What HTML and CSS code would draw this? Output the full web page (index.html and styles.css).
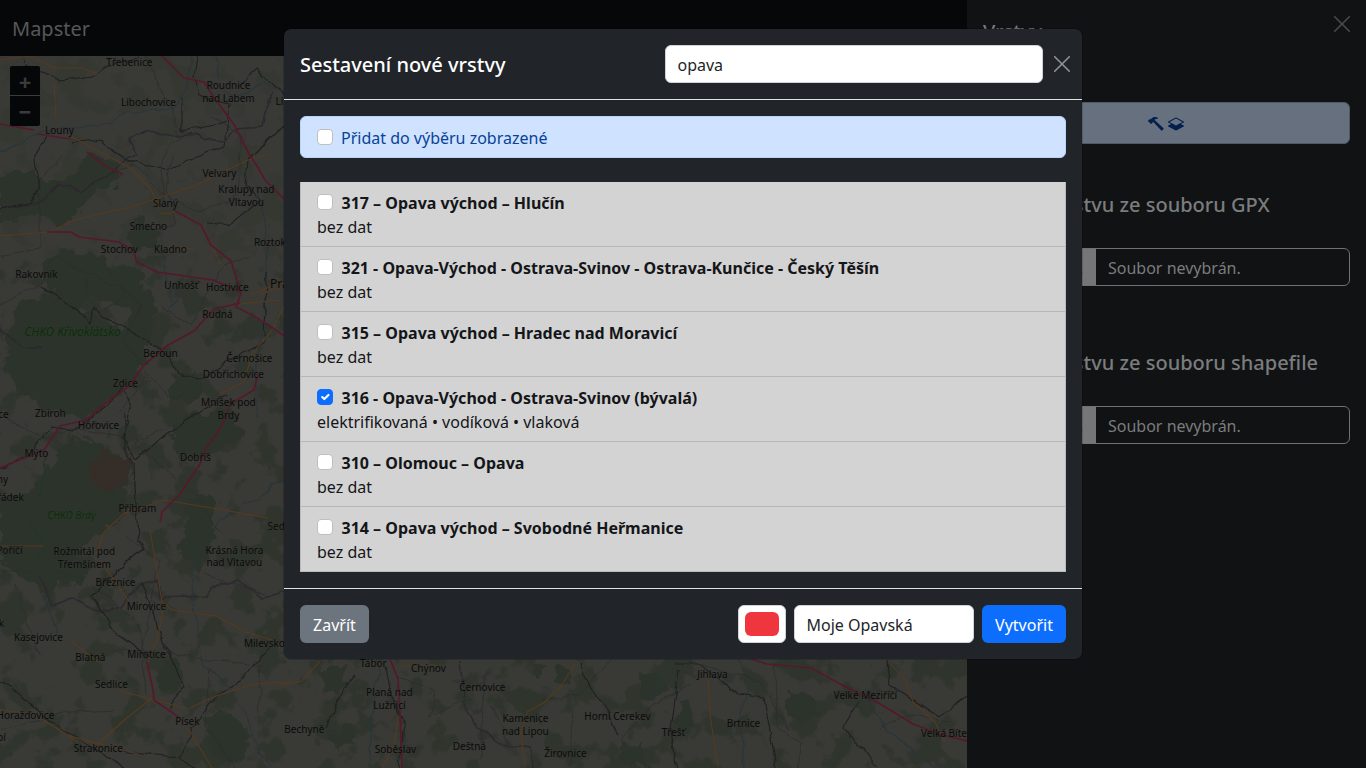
FILE: index.html
```html
<!DOCTYPE html>
<html lang="cs">
<head>
<meta charset="utf-8">
<title>Mapster</title>
<link rel="stylesheet" href="styles.css">
</head>
<body>
<div class="app">
  <header class="navbar">Mapster</header>
  <main class="map">
    <svg class="map-canvas" width="967" height="712" viewBox="0 56 967 712">
      <defs>
        <filter id="rough" x="-5%" y="-5%" width="110%" height="110%" color-interpolation-filters="sRGB">
          <feTurbulence type="fractalNoise" baseFrequency="0.07" numOctaves="3" seed="4"/>
          <feDisplacementMap in="SourceGraphic" scale="20" xChannelSelector="R" yChannelSelector="G"/>
        </filter>
        <filter id="wiggle" filterUnits="userSpaceOnUse" x="-20" y="30" width="1010" height="760" color-interpolation-filters="sRGB">
          <feTurbulence type="fractalNoise" baseFrequency="0.06" numOctaves="2" seed="9"/>
          <feDisplacementMap in="SourceGraphic" scale="8" xChannelSelector="R" yChannelSelector="G"/>
        </filter>
        <filter id="woods" x="0" y="0" width="100%" height="100%" color-interpolation-filters="sRGB">
          <feTurbulence type="fractalNoise" baseFrequency="0.035" numOctaves="5" seed="21"/>
          <feColorMatrix values="0 0 0 0 .172  0 0 0 0 .203  0 0 0 0 .165  12 0 0 0 -6.4"/>
        </filter>
      </defs>
      <rect class="land" y="56" width="967" height="712"/>
      <rect y="56" width="967" height="200" filter="url(#woods)" opacity=".3"/>
      <rect y="256" width="967" height="512" filter="url(#woods)" opacity=".75"/>
      <g class="forest" filter="url(#rough)">
        <path d="M0 178l20-10 22 12 38-8 8-18 20 4 12 22-22 12-28 30-14 4-18-12-38 6z"/>
        <path d="M132 225l12-7 16 20-8 10-22-2zM40 262l24-12 30 2 20 14 26-2 4 30-20 14-30-10-26 10-22-26z"/>
        <path d="M20 300l45-2 40 28 45 0 0 24-26 38-40 30-48-12-30-34 0-40z"/>
        <path d="M128 294l22-4 8 18-10 22-16-6zM172 374l22-4 12 20-16 14-20-2zM168 434l22-20 44-4 10 26-34 20-28 2z"/>
        <path d="M0 496l30-2 40-56 36 8 24 20-6 52-34 22-44 60-18-22-28-12zM188 500l26-6-2 50-12 32-18-14z"/>
        <path d="M70 560l22 4-10 22-24-6zM160 656l22 8-2 22-20 6zM204 718l22-6 22 20-4 30-26 2zM322 668l24-4-2 24-20 6zM637 675l24 0 6 18-24 8zM678 700l14 0 6 24-18 10zM790 688l24 6 4 22-22 8-10-18z"/>
        <path d="M327 732l24-6 6 12-18 12zM556 665l14 4-2 16-16-4zM621 746l20-4 10 26-30 0zM532 665l12 0-4 12-10-2z"/>
      </g>
      <path class="military" filter="url(#rough)" d="M90 465l16-14 10 6 16 2-6 22-24 10-12-12z"/>
      <g class="water" filter="url(#wiggle)">
        <path d="M0 199l24-8 16-12 20-2 24-4 24-2 16-9 20-3 30-2 12-20 5-30-4-36" transform="translate(0 -48)"/>
        <path d="M217 56l3 34 16 8 28-16 20 14M255 185l8 30 4 30-2 70-8 34 0 70M236 508l-20 18-20 28-4 30 4 40 8 42 16 12 22 28 16 44 24 30M40 594l20 40M160 250l14 54M380 665l-8 44-4 58M670 660l-15 36M740 660l8 30-8 26 4 52M865 690l20 40 50 38"/>
        <path d="M290 480l-18 2-12 18-20 4M0 370l20-16M180 300l-10 10M290 650l-26 12"/>
      </g>
      <g class="border" filter="url(#wiggle)">
        <path d="M0 210l24-4 20-6 14-16 14 4 10 6 14-12 18-10 14-16 10 0 -10-16 16-10 30 6 26-2 6 4 18 2 12-12 26-2 8-34"/>
        <path d="M0 330l10 6 14 12 18 0M38 578l10 10 2 18 22-8 20 10 14 4 16-6 14-20 22-6 4 18 44-2 14-14 20 0 22 16 26-6M460 660l4 44 12 20 20 18 34 6 4 24"/>
        <path class="park" d="M86 276l20-12 14 20 2 14-22 12-14-18zM48 454l-8 40-10 24 14 32-14 22-30-2M150 374l20 24 36-8M60 570l24 10-16 8"/>
      </g>
      <g class="track" filter="url(#wiggle)">
        <path d="M0 255l40-6 0-70 22-24M110 176l22-12 40 36 30 12 36-16 4-60-30-20M145 56l30 60 4 22-18 18 4 48M0 304l40-20 12-28 60 28 30 20-18 36 28 42M0 416l48 24 24-12 48 8 14 36-22 20M160 430l-26 14 60 50 28 40M15 584l24 72M0 730l72-18 44-2M116 650l50 2 96 14-4 46M143 650l16-90-32-24M210 668l-4 60 30 40M395 676l42 16-8 24 42-18M484 676l-3 82M492 706l20 40M620 742l30-34 40-24M686 660l74 22 30 48M774 664l4 64 24 14-4 26M880 728l30-14 40 8"/>
        <path d="M172 154l-6 36 12 36-24 2M250 256l-26 8-32 60-32-16M146 378l-8 14-20 20M92 586l48 38 6 70M204 574l60 20M540 700l40-6 30-34M574 715l-4 52"/>
      </g>
      <g class="rail" filter="url(#wiggle)">
        <path d="M23 56l2 10 36 14 30-4 24-14 24-4M46 136l-12 26 8 28-14 14-28 6M72 144l28-4 20 16 14 6 32 8 28-12 30-12 4-42-30-8-4-20 4-24-12-6M182 98l0 34 28-6 14-6M284 126l-36 34-2 26 14 14-30 24-22-2M284 96l-28-28-18 20M40 286l24 16 16 10 10 10 4-16 8 12 30 14 20 12 18 12 12 20 20 2 34-20 28-16 2-70M0 468l32-16 20-26 22 4 34-26 14-16 8 20-8 30 14 22 30-26 60-40M124 412l0 40 10 12 2 40 2 36 6 8-28 24-24 22 22 38 34 24M0 682l18 10 28 26 16 12 38 22 28 18M140 584l14 30 8 28 14 22 8 24-16 20M120 750l60 8 20 14M270 648l-30 34-30 20-22 38-8 20"/>
        <path d="M385 666l4 24 14 32-4 46M353 676l-18 30-8 24M580 664l10 22 18 26 10 24M679 670l-8 60 6 40M676 664l24 0 38 30 26 4 8 46 6 34M888 660l2 26 35 20 15 10 27-20M858 702l-14 24 12 18 8 4 14 20"/>
      </g>
      <g class="main-road">
        <path d="M0 60l30-4 24 12 28 0 16 6M54 82l2 36M70 136l60 32 20 20 10 20M0 236l50-4 24-12 60-14 60-20 54-26 20-6M160 214l20-2M170 252l24-4M210 240l10 24M130 508l-26 24-8 22M124 514l40-14 60 10 44 8M150 530l12 72 10 8 44 6 30 16 26 8M0 546l44 0M164 605l-6 32-10 26M72 642l26 20M118 690l36 10 30 8M152 698l-30 24-24 22-28-8 68 18M190 708l26-12 38-12 36-2M188 728l24 40M0 710l34 4 44 28M100 560l28 40M320 661l-18 20-22 4M398 716l-4 30-12 22M399 666l44 0M575 664l-14 22-16 16-18 10-6 22 4 34M708 675l2 40 8 52M889 662l16 18 8 22 22 20 10 20"/>
        <path d="M284 286l-24 8M284 306l-12 24-20 24-8 28-24 12M250 295l34-14M240 304l40-4"/>
      </g>
      <g class="motorway">
        <path d="M0 124l34 6M38 134l32 5M162 56l12 12 10 10 20 4 9 14 22 30 14 28 8 12 8 14 20 20M87 152l18 14 18 8M175 211l26 14 10 20 20 16 10 32-5 14 16 8 22 14 12 8M47 232l24 0 8 5 40 5 14 8 4 12 20 10 56 8 28 12M240 303l-26 6-20 22-26 14-24 20-14 20-24 18-20 17-26 6-16 24-44 18M258 374l-4 16-24 14-8 22-16 22-6 16-20 30-18 18-2 10M147 662l6 28 1 10 26 18M390 659l8 20 2 30 2 59M751 659l16 5 44 4 44 24 22 10 36 22 26 10 32 8"/>
      </g>
      <g class="labels" transform="translate(.4 .8)">
        <text x="129" y="65">Třebenice</text><text x="148" y="105">Libochovice</text>
        <text x="228" y="88">Roudnice</text><text x="228" y="101">nad Labem</text>
        <text x="279" y="104">Li</text><text x="59" y="133">Louny</text>
        <text x="219" y="176">Velvary</text><text x="246" y="192">Kralupy nad</text><text x="246" y="205">Vltavou</text>
        <text x="165" y="206">Slaný</text><text x="148" y="229">Smečno</text><text x="119" y="252">Stochov</text><text x="170" y="252">Kladno</text>
        <text x="272" y="245">Roztoky</text><text x="36" y="277">Rakovník</text><text x="181" y="288">Unhošť</text><text x="227" y="290">Hostivice</text>
        <text class="city" x="286" y="287">Praha</text><text x="217" y="317">Rudná</text>
        <text class="reserve" x="72" y="335">CHKO Křivoklátsko</text>
        <text x="160" y="356">Beroun</text><text x="249" y="361">Černošice</text><text x="233" y="377">Dobřichovice</text>
        <text x="125" y="386">Zdice</text><text x="228" y="405">Mníšek pod</text><text x="228" y="418">Brdy</text>
        <text x="50" y="416">Zbiroh</text><text x="98" y="428">Hořovice</text><text x="3" y="417">ce</text><text x="36" y="456">Mýto</text>
        <text x="195" y="460">Dobříš</text><text x="2" y="482">ny</text><text x="10" y="500">řádek</text><text x="137" y="511">Příbram</text>
        <text class="reserve small" x="71" y="518">CHKO Brdy</text>
        <text x="288" y="529">Sedlčany</text><text x="9" y="553">Poříčí</text><text x="84" y="554">Rožmitál pod</text><text x="84" y="567">Třemšínem</text>
        <text x="234" y="553">Krásná Hora</text><text x="234" y="565">nad Vltavou</text><text x="115" y="585">Březnice</text><text x="146" y="609">Mirovice</text>
        <text x="1" y="626">k</text><text x="38" y="640">Kasejovice</text><text x="90" y="660">Blatná</text><text x="146" y="657">Mirotice</text><text x="264" y="646">Milevsko</text>
        <text x="111" y="687">Sedlice</text><text x="25" y="718">Horažďovice</text><text x="187" y="724">Písek</text><text x="1" y="740">bí</text><text x="98" y="751">Strakonice</text>
        <text x="373" y="666">Tábor</text><text x="428" y="671">Chýnov</text><text x="482" y="690">Černovice</text><text x="389" y="695">Planá nad</text><text x="389" y="708">Lužnicí</text>
        <text x="304" y="732">Bechyně</text><text x="395" y="752">Soběslav</text><text x="469" y="749">Deštná</text><text x="525" y="721">Kamenice</text><text x="525" y="734">nad Lipou</text>
        <text x="565" y="756">Žirovnice</text><text x="617" y="719">Horní Cerekev</text><text x="712" y="677">Jihlava</text><text x="743" y="726">Brtnice</text><text x="673" y="735">Třešť</text>
        <text x="865" y="698">Velké Meziříčí</text><text x="946" y="736">Velká Bíteš</text>
      </g>
    </svg>
    <div class="map-zoom"><span class="plus">+</span><span>−</span></div>
  </main>
  <aside class="sidebar">
    <div class="sidebar-head"><h5>Vrstvy</h5>
      <svg class="close" viewBox="0 0 16 16"><path d="M.7.7l14.6 14.6M15.3.7L.7 15.3"/></svg>
    </div>
    <div class="build">
      <svg viewBox="0 0 16 16"><path d="M9.972 2.508a.5.5 0 0 0-.16-.556l-.178-.129a5 5 0 0 0-2.076-.783C6.215.862 4.504 1.229 2.84 3.133H1.786a.5.5 0 0 0-.354.147L.146 4.567a.5.5 0 0 0 0 .706l2.571 2.579a.5.5 0 0 0 .708 0l1.286-1.29a.5.5 0 0 0 .146-.353V5.57l8.387 8.873A.5.5 0 0 0 14 14.5l1.5-1.5a.5.5 0 0 0 .017-.689l-9.129-8.63c.747-.456 1.772-.839 3.112-.839a.5.5 0 0 0 .472-.334"/></svg>
      <svg viewBox="0 0 16 16"><path d="M8.235 1.559a.5.5 0 0 0-.47 0l-7.5 4a.5.5 0 0 0 0 .882L3.188 8 .264 9.559a.5.5 0 0 0 0 .882l7.5 4a.5.5 0 0 0 .47 0l7.5-4a.5.5 0 0 0 0-.882L12.813 8l2.922-1.559a.5.5 0 0 0 0-.882zM8 9.433 1.562 6 8 2.567 14.438 6z"/></svg>
    </div>
    <h5 class="source-title">Nahrát vrstvu ze souboru GPX</h5>
    <div class="file"><span class="file-button">Procházet…</span><span class="file-name">Soubor nevybrán.</span></div>
    <h5 class="source-title">Nahrát vrstvu ze souboru shapefile</h5>
    <div class="file"><span class="file-button">Procházet…</span><span class="file-name">Soubor nevybrán.</span></div>
  </aside>
</div>
<div class="overlay">
  <section class="modal">
    <header class="modal-head">
      <h5>Sestavení nové vrstvy</h5>
      <input class="field search" value="opava">
      <svg class="close" viewBox="0 0 16 16"><path d="M.7.7l14.6 14.6M15.3.7L.7 15.3"/></svg>
    </header>
    <div class="modal-body">
      <label class="select-all"><i class="check"></i>Přidat do výběru zobrazené</label>
      <div class="list">
        <div class="item"><label><i class="check"></i>317 – Opava východ – Hlučín</label><p>bez dat</p></div>
        <div class="item"><label><i class="check"></i>321 - Opava-Východ - Ostrava-Svinov - Ostrava-Kunčice - Český Těšín</label><p>bez dat</p></div>
        <div class="item"><label><i class="check"></i>315 – Opava východ – Hradec nad Moravicí</label><p>bez dat</p></div>
        <div class="item"><label><i class="check checked"><svg viewBox="0 0 20 20"><path d="m6 10 3 3 6-6"/></svg></i>316 - Opava-Východ - Ostrava-Svinov (bývalá)</label><p>elektrifikovaná • vodíková • vlaková</p></div>
        <div class="item"><label><i class="check"></i>310 – Olomouc – Opava</label><p>bez dat</p></div>
        <div class="item"><label><i class="check"></i>314 – Opava východ – Svobodné Heřmanice</label><p>bez dat</p></div>
      </div>
    </div>
    <footer class="modal-foot">
      <button class="btn secondary">Zavřít</button>
      <div class="color"><span></span></div>
      <input class="field name" value="Moje Opavská">
      <button class="btn primary">Vytvořit</button>
    </footer>
  </section>
</div>
</body>
</html>
```
FILE: styles.css
```css
* { box-sizing: border-box; }
body { margin: 0; width: 1366px; height: 768px; overflow: hidden; background: #08090a; font: 16px/24px "Noto Sans", sans-serif; }
h5, p { margin: 0; }
h5 { font-size: 20px; line-height: 24px; font-weight: 500; }
.app { display: grid; grid-template: 56px 712px / 967px 399px; }
.navbar { padding: 14px 12px 0; font-size: 20px; line-height: 30px; color: #565758; background: #060708; }
.map { position: relative; overflow: hidden; grid-row: 2; }
.map-canvas { display: block; }
.map-zoom { position: absolute; left: 10px; top: 10px; width: 30px; height: 60px; border-radius: 2px; overflow: hidden; background: #060708; color: #3a3b3c; font: bold 22px/30px "Noto Sans", sans-serif; text-align: center; }
.map-zoom span { display: block; height: 30px; }
.map-zoom .plus { border-bottom: 1px solid #3a3b3c; }
.land { fill: #393935; }
.forest { fill: #2b332a; }
.military { fill: #352e28; }
.water, .border, .track, .rail, .main-road, .motorway { fill: none; stroke-linejoin: round; }
.water { stroke: #28353c; stroke-width: 1.1; }
.border { stroke: #2d272f; stroke-width: 1.5; }
.border .park { stroke: #25352a; stroke-width: 1; }
.track { stroke: #2d2c2d; stroke-width: .8; }
.rail { stroke: #1f2021; stroke-width: 1.1; }
.main-road { stroke: #553a1f; stroke-width: 1.1; }
.motorway { stroke: #56192a; stroke-width: 1.7; }
.labels { font-size: 10px; text-anchor: middle; fill: #0b0b0b; stroke: #393935; stroke-width: 1.2px; stroke-opacity: .5; paint-order: stroke; }
.labels .city { font-size: 12px; }
.labels .reserve { fill: #082e09; font-size: 11.8px; font-style: italic; }
.labels .small { font-size: 10px; }
.sidebar { grid-column: 2; grid-row: 1 / 3; padding: 16px; background: #101214; color: #7b7c7d; }
.sidebar-head { display: flex; justify-content: space-between; height: 86px; }
.sidebar-head h5 { padding-top: 4px; }
.close { width: 16px; height: 16px; fill: none; stroke: #909294; stroke-width: 1.6; stroke-linecap: round; flex: none; }
.sidebar .close { stroke: #494a4c; }
.build { display: flex; justify-content: center; align-items: center; gap: 4px; height: 42px; margin-bottom: 49px; border: 1px solid #4f5966; border-radius: 6px; background: #67707f; }
.build svg { width: 16px; height: 16px; fill: #031f4d; }
.sidebar .build { padding: 2px 1px 0 0; }
.source-title { margin-bottom: 31px; white-space: nowrap; }
.file { display: flex; height: 38px; margin-bottom: 65px; border: 1px solid #6f7173; border-radius: 6px; overflow: hidden; line-height: 38px; }
.file-button { width: 112px; padding-left: 12px; background: #757678; color: #111; }
.file-name { padding-left: 12px; }
.overlay { position: absolute; inset: 0; padding-top: 28px; }
.modal { width: 800px; height: 632px; margin: 0 auto; border: 1px solid rgba(0,0,0,.175); border-radius: 8px; background: #212529; background-clip: padding-box; color: #fff; }
.modal-head { display: flex; align-items: center; height: 71px; padding: 0 12px 0 16px; border-bottom: 1px solid #dee2e6; }
.modal-head h5 { width: 365px; padding-top: 2px; }
.modal-head .close { margin-left: 11px; }
.field { height: 38px; padding: 2px 11.5px 0; border: 1px solid #ced4da; border-radius: 6px; background: #fff; color: #212529; font: inherit; outline: 0; }
.search { width: 378px; }
.modal-body { height: 488px; padding: 16px; }
.select-all { display: flex; height: 42px; margin-bottom: 24px; padding: 9px 16px; border: 1px solid #b6d4fe; border-radius: 6px; background: #cfe2ff; color: #084298; }
.check { position: relative; width: 16px; height: 16px; margin: 3px 8px 0 0; flex: none; border: 1px solid #bfbfbf; border-radius: 4px; background: #fff; }
.item .check { margin-right: 8.5px; }
.checked { border-color: #0d6efd; background: #0d6efd; }
.check svg { display: block; width: 14px; height: 14px; fill: none; stroke: #fff; stroke-width: 3; stroke-linecap: round; stroke-linejoin: round; }
.list { border: 1px solid #b9babb; border-top: 0; background: #d3d3d3; color: #141619; }
.item { height: 65px; padding: 8px 16px; border-bottom: 1px solid #b7b7b8; }
.item:last-child { height: 64px; border-bottom: 0; }
.item label { display: flex; height: 25px; padding-top: 1px; font-weight: 700; }
.modal-foot { display: flex; align-items: center; gap: 8px; height: 71px; padding: 0 16px; border-top: 1px solid #dee2e6; }
.btn { height: 38px; padding: 2px 13px 0; border: 0; border-radius: 6px; font: inherit; color: #fff; }
.secondary { width: 69px; margin-right: auto; background: #6c757d; }
.primary { width: 84px; background: #0d6efd; }
.color { width: 48px; height: 38px; padding: 6px; border: 1px solid #ced4da; border-radius: 6px; background: #fff; }
.color span { display: block; height: 24px; border-radius: 6px; background: #ef353d; }
.name { width: 180px; }
```
